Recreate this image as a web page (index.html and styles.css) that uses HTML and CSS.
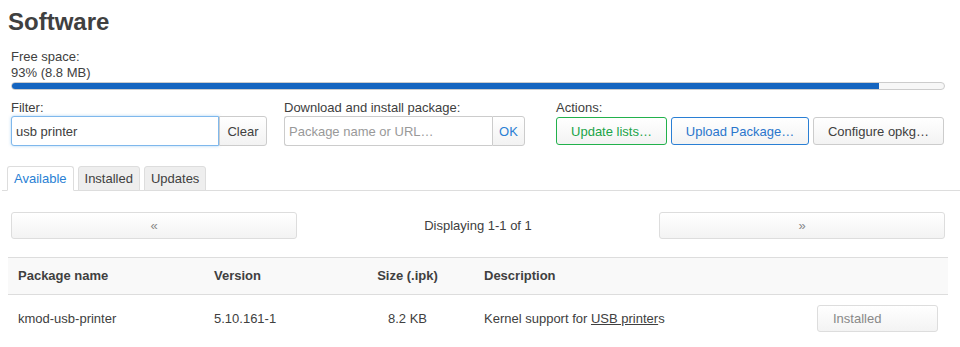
FILE: index.html
```html
<!DOCTYPE html>
<html lang="en">
<head>
    <meta charset="UTF-8">
    <meta name="viewport" content="width=device-width, initial-scale=1.0">
    <title>Software</title>
    <link rel="stylesheet" href="styles.css">
</head>
<body>
    <h2 class="page-title">Software</h2>

    <div class="free-space">
        <div>Free space:</div>
        <div>93% (8.8 MB)</div>
        <div class="progress"><div class="progress-bar" style="width: 93%"></div></div>
    </div>

    <div class="controls">
        <div class="control">
            <label>Filter:</label>
            <div class="input-group filter-group">
                <input type="text" class="focused" value="usb printer">
                <button class="addon">Clear</button>
            </div>
        </div>
        <div class="control">
            <label>Download and install package:</label>
            <div class="input-group download-group">
                <input type="text" placeholder="Package name or URL…">
                <button class="addon addon-ok">OK</button>
            </div>
        </div>
        <div class="control">
            <label>Actions:</label>
            <div class="actions">
                <button class="btn btn-green">Update lists…</button>
                <button class="btn btn-blue">Upload Package…</button>
                <button class="btn btn-config">Configure opkg…</button>
            </div>
        </div>
    </div>

    <ul class="tabs">
        <li class="active">Available</li>
        <li>Installed</li>
        <li>Updates</li>
    </ul>

    <div class="pager">
        <button class="page-btn">&laquo;</button>
        <div class="page-info">Displaying 1-1 of 1</div>
        <button class="page-btn">&raquo;</button>
    </div>

    <table class="packages">
        <colgroup>
            <col style="width: 196px">
            <col style="width: 137px">
            <col style="width: 133px">
            <col style="width: 333px">
            <col style="width: 141px">
        </colgroup>
        <thead>
            <tr>
                <th>Package name</th>
                <th>Version</th>
                <th class="center">Size (.ipk)</th>
                <th>Description</th>
                <th></th>
            </tr>
        </thead>
        <tbody>
            <tr>
                <td>kmod-usb-printer</td>
                <td>5.10.161-1</td>
                <td class="center">8.2 KB</td>
                <td>Kernel support for <a href="#">USB printer</a>s</td>
                <td><button class="installed" disabled>Installed</button></td>
            </tr>
        </tbody>
    </table>
</body>
</html>
```

FILE: styles.css
```css
body {
    margin: 0;
    padding: 0 12px 0 8px;
    font-family: "Liberation Sans", Arial, sans-serif;
    font-size: 13px;
    line-height: 16px;
    color: #404040;
    background-color: #fff;
}

button {
    font-family: inherit;
    font-size: 13px;
    white-space: nowrap;
}

.page-title {
    margin: 0;
    padding-top: 7px;
    font-size: 24px;
    line-height: 30px;
    font-weight: bold;
    color: #404040;
}

.free-space {
    margin: 12px 3px 0;
}

.progress {
    margin-top: 1px;
    height: 6px;
    border: 1px solid #ccc;
    border-radius: 4px;
    background-color: #f7f7f7;
    overflow: hidden;
}

.progress-bar {
    height: 100%;
    background-color: #1565c0;
}

.controls {
    display: grid;
    grid-template-columns: 273px 272px 1fr;
    margin: 10px 3px 0;
}

.control label {
    display: block;
}

.input-group {
    display: flex;
    height: 30px;
}

.filter-group {
    width: 256px;
}

.download-group {
    width: 241px;
}

.input-group input {
    flex: 1;
    min-width: 0;
    box-sizing: border-box;
    height: 30px;
    margin: 0;
    padding: 0 4px;
    border: 1px solid #ccc;
    border-right: none;
    border-radius: 3px 0 0 3px;
    font-family: inherit;
    font-size: 13px;
    color: #404040;
    outline: none;
}

.input-group input::placeholder {
    color: #999;
}

.input-group input.focused {
    border: 1px solid #7fb8ec;
    box-shadow: 0 0 3px rgba(82, 168, 236, 0.5);
}

.addon {
    box-sizing: border-box;
    height: 30px;
    margin: 0;
    padding: 0;
    width: 48px;
    border: 1px solid #ccc;
    border-radius: 0 3px 3px 0;
    background: linear-gradient(#fff, #f2f2f2);
    color: #404040;
}

.addon-ok {
    width: 33px;
    color: #2a7fd4;
}

.actions {
    display: flex;
    gap: 4px;
    padding-top: 1px;
}

.btn {
    box-sizing: border-box;
    height: 28px;
    padding: 0;
    border: 1px solid #ccc;
    border-radius: 3px;
    background: linear-gradient(#fff, #f3f3f3);
    color: #404040;
}

.btn-green {
    width: 111px;
    border-color: #22b14c;
    color: #1aa448;
}

.btn-blue {
    width: 138px;
    border-color: #2a7fd4;
    color: #2a76cc;
}

.btn-config {
    width: 131px;
}

.tabs {
    display: flex;
    list-style: none;
    margin: 20px -12px 0 -6px;
    padding: 0 0 0 5px;
    border-bottom: 1px solid #ddd;
}

.tabs li {
    margin: 0 4px -1px 0;
    padding: 4px 6px 3px;
    border: 1px solid #ddd;
    border-radius: 3px 3px 0 0;
    background-color: #eee;
    color: #404040;
}

.tabs li.active {
    background-color: #fff;
    border-bottom-color: #fff;
    color: #2a7fd4;
}

.pager {
    display: grid;
    grid-template-columns: 286px 1fr 286px;
    margin: 21px 3px 0;
}

.page-btn {
    height: 27px;
    border: 1px solid #ddd;
    border-radius: 3px;
    background: linear-gradient(#fff, #f3f3f3);
    color: #888;
}

.page-info {
    text-align: center;
    line-height: 27px;
}

.packages {
    width: 940px;
    margin-top: 18px;
    border-collapse: collapse;
    table-layout: fixed;
}

.packages th,
.packages td {
    padding: 10px;
    text-align: left;
    vertical-align: middle;
}

.packages th {
    background-color: #f9f9f9;
    border-top: 1px solid #ddd;
    border-bottom: 1px solid #ddd;
    font-weight: bold;
}

.packages .center {
    text-align: center;
}

.packages a {
    color: #404040;
    text-decoration: underline;
}

.installed {
    box-sizing: border-box;
    width: 121px;
    height: 27px;
    padding: 0 15px;
    text-align: left;
    border: 1px solid #ddd;
    border-radius: 3px;
    background: linear-gradient(#fff, #f3f3f3);
    color: #888;
}
```
